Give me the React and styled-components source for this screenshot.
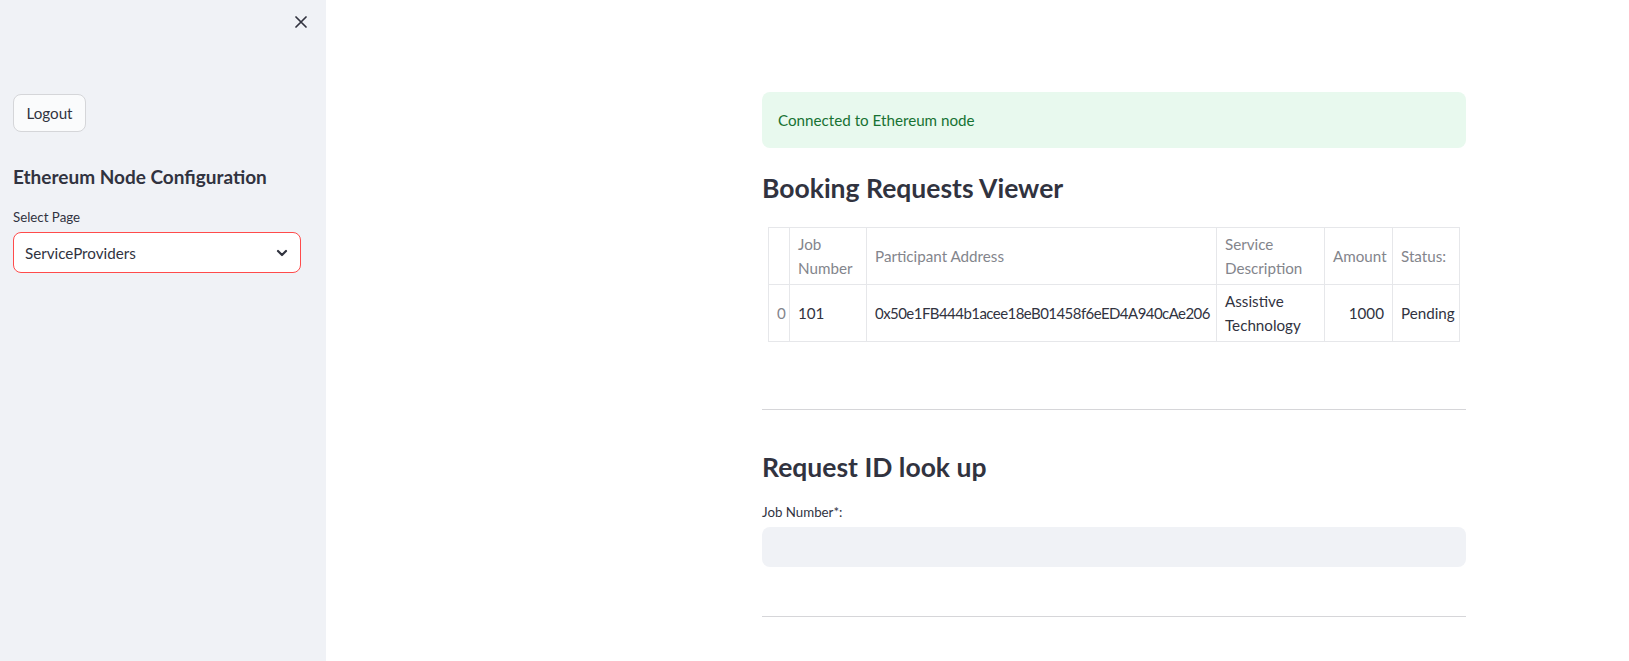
import styled, { createGlobalStyle } from 'styled-components';

const GlobalStyle = createGlobalStyle`
  * {
    box-sizing: border-box;
  }
  body {
    margin: 0;
    font-family: Lato, "Noto Sans", sans-serif;
    color: #31333f;
    background: #ffffff;
  }
`;

const Page = styled.div`
  display: flex;
  min-height: 100vh;
`;

const Sidebar = styled.aside`
  width: 326px;
  flex-shrink: 0;
  background: #f0f2f6;
  padding: 0 25px 0 13px;
`;

const CloseRow = styled.div`
  height: 44px;
  display: flex;
  align-items: center;
  justify-content: flex-end;
  margin-right: -6px;
`;

const CloseButton = styled.button`
  border: none;
  background: none;
  padding: 0;
  width: 12px;
  height: 12px;
  display: flex;
  color: #31333f;
  cursor: pointer;
`;

const Button = styled.button`
  margin-top: 50px;
  height: 38px;
  width: 73px;
  padding: 0;
  border: 1px solid #d5d6d9;
  border-radius: 8px;
  background: #fafbfc;
  color: #31333f;
  font-family: inherit;
  font-size: 15.2px;
`;

const SideTitle = styled.h2`
  margin: 33px 0 0;
  font-size: 19px;
  line-height: 24px;
  font-weight: 700;
`;

const Label = styled.label`
  display: block;
  margin-top: ${(p) => p.$top}px;
  font-size: 13.3px;
  line-height: 20px;
  color: #31333f;
`;

const Select = styled.div`
  margin-top: ${(p) => p.$top}px;
  height: 41px;
  display: flex;
  align-items: center;
  justify-content: space-between;
  padding: 0 12px 0 11px;
  background: #ffffff;
  border: 1px solid #ff4b4b;
  border-radius: 8px;
  font-size: 15.2px;
`;

const Main = styled.main`
  flex: 1;
  padding: 92px 0 0 436px;
`;

const Content = styled.div`
  width: 704px;
`;

const Alert = styled.div`
  padding: 16px;
  border-radius: 8px;
  background: #e8f9ee;
  color: #177233;
  font-size: 15.2px;
  line-height: 24px;
`;

const Heading = styled.h3`
  margin: ${(p) => p.$top}px 0 0;
  font-size: 26.5px;
  line-height: 34px;
  font-weight: 700;
`;

const Table = styled.table`
  margin: 22px 0 0 6px;
  width: 691px;
  table-layout: fixed;
  border-collapse: collapse;
  font-size: 15.2px;
  line-height: 24px;
`;

const Th = styled.th`
  padding: 4px 8px;
  border: 1px solid #e6e7ea;
  font-weight: 400;
  color: #83858c;
  text-align: ${(p) => (p.$right ? 'right' : 'left')};
  vertical-align: middle;
`;

const Td = styled.td`
  padding: 4px 8px;
  border: 1px solid #e6e7ea;
  color: ${(p) => (p.$muted ? '#83858c' : '#31333f')};
  text-align: ${(p) => (p.$right ? 'right' : 'left')};
  vertical-align: middle;
`;

const Address = styled.span`
  white-space: nowrap;
  font-size: 15px;
  letter-spacing: -0.55px;
`;

const Divider = styled.hr`
  margin: ${(p) => p.$top}px 0 0;
  border: none;
  border-top: 1px solid #d6d6d9;
`;

const Input = styled.div`
  margin-top: 5px;
  height: 40px;
  border-radius: 8px;
  background: #f0f2f6;
`;

const columns = [21, 77, 350, 108, 68, 67];

export default function App() {
  return (
    <Page>
      <GlobalStyle />
      <Sidebar>
        <CloseRow>
          <CloseButton aria-label="Close sidebar">
            <svg width="12" height="12" viewBox="0 0 12 12" fill="none" stroke="currentColor" strokeWidth="1.7" strokeLinecap="round">
              <path d="M1 1l10 10M11 1L1 11" />
            </svg>
          </CloseButton>
        </CloseRow>
        <Button>Logout</Button>
        <SideTitle>Ethereum Node Configuration</SideTitle>
        <Label $top={18}>Select Page</Label>
        <Select $top={5}>
          <span>ServiceProviders</span>
          <svg width="12" height="8" viewBox="0 0 12 8" fill="none" stroke="#31333f" strokeWidth="2.2" strokeLinecap="round" strokeLinejoin="round">
            <path d="M2 2l4 4 4-4" />
          </svg>
        </Select>
      </Sidebar>
      <Main>
        <Content>
          <Alert>Connected to Ethereum node</Alert>
          <Heading $top={23}>Booking Requests Viewer</Heading>
          <Table>
            <colgroup>
              {columns.map((w, i) => (
                <col key={i} style={{ width: w }} />
              ))}
            </colgroup>
            <thead>
              <tr>
                <Th />
                <Th>Job Number</Th>
                <Th>Participant Address</Th>
                <Th>Service Description</Th>
                <Th $right>Amount</Th>
                <Th>Status:</Th>
              </tr>
            </thead>
            <tbody>
              <tr>
                <Td $muted>0</Td>
                <Td>101</Td>
                <Td>
                  <Address>0x50e1FB444b1acee18eB01458f6eED4A940cAe206</Address>
                </Td>
                <Td>Assistive Technology</Td>
                <Td $right>1000</Td>
                <Td>Pending</Td>
              </tr>
            </tbody>
          </Table>
          <Divider $top={67} />
          <Heading $top={40}>Request ID look up</Heading>
          <Label $top={18}>Job Number*:</Label>
          <Input />
          <Divider $top={49} />
        </Content>
      </Main>
    </Page>
  );
}
